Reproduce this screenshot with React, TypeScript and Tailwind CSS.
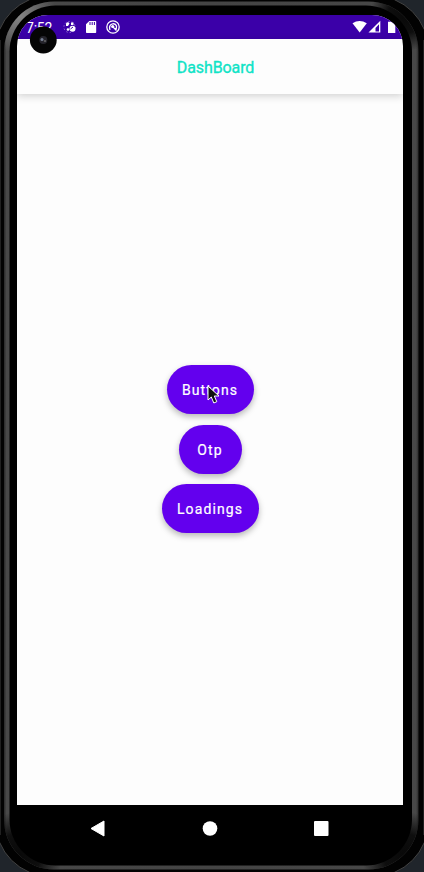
import React from "react";

function StatusIcons() {
  return (
    <svg className="absolute inset-0" width="386" height="24" viewBox="17 15 386 24" fill="#fff">
      <g>
        <path d="M66 23.500q2-2.500 3.500 0l-1.500 2.500h-2zM71 22.500h2.500v2.500H71z" />
        <circle cx="68" cy="29.500" r="1.300" />
        <circle cx="72.500" cy="28.800" r="3" />
        <circle cx="69.500" cy="27" r="5.600" fill="none" stroke="#fff" strokeWidth="1" strokeDasharray="1.500 2" opacity=".4" />
        <path d="M70.500 29l2.500-2" stroke="#3b00a8" strokeWidth="1" />
      </g>
      <path d="M89.300 21h6.200q.7 0 .7.7v10.600q0 .7-.7.7h-8.800q-.7 0-.7-.7v-8z" />
      <path d="M90 22v3M92.200 22v3M94.400 22v3" stroke="#3b00a8" strokeWidth="1" />
      <circle cx="113" cy="27" r="6.200" fill="none" stroke="#fff" strokeWidth="1.300" />
      <path d="M110 30q-1.500-4.500 2-6 3.500-1 4.500 2 .4 2.500-1.500 4M112 26l4.500 4.500" fill="none" stroke="#fff" strokeWidth="1.300" />
      <circle cx="112.700" cy="26.500" r="1.600" />
      <path d="M352.500 23.200q7-4.600 14.300 0L359.700 32.500z" />
      <path d="M368.500 32.500L380.300 20.700V32.500z" />
      <path d="M375.500 28v3.500h3.500V24.200z" fill="#3b00a8" />
      <path d="M388 21.800h6l1.300 2V33H388z" />
    </svg>
  );
}

function Pill({ label, className }: { label: string; className: string }) {
  return (
    <button
      className={`flex h-[49px] items-center justify-center rounded-full bg-[#6300ee] pt-[2px] text-[14px] font-normal tracking-[1.1px] text-white shadow-[0_3px_6px_rgba(0,0,0,0.28)] [-webkit-text-stroke:0.2px_#fff] ${className}`}
    >
      {label}
    </button>
  );
}

export default function App() {
  return (
    <div className="relative h-[872px] w-[424px] overflow-hidden bg-[#20252b] font-[Roboto,sans-serif]">
      <svg className="absolute inset-0" width="424" height="872">
        <defs>
          <linearGradient id="rim" gradientUnits="userSpaceOnUse" x1="4" x2="418.500" y1="0" y2="0">
            <stop offset="0" stopColor="#292929" />
            <stop offset=".006" stopColor="#484848" />
            <stop offset=".5" stopColor="#444" />
            <stop offset=".994" stopColor="#484848" />
            <stop offset="1" stopColor="#2c2c2c" />
          </linearGradient>
          <radialGradient id="glow">
            <stop offset="0" stopColor="#888" />
            <stop offset="1" stopColor="#888" stopOpacity="0" />
          </radialGradient>
          <radialGradient id="shade">
            <stop offset="0" stopColor="#080808" />
            <stop offset=".5" stopColor="#080808" stopOpacity=".9" />
            <stop offset="1" stopColor="#080808" stopOpacity="0" />
          </radialGradient>
          <clipPath id="rimClip">
            <rect x="4" y="1.500" width="414.500" height="868" rx="50" />
          </clipPath>
        </defs>
        <rect x="-4.500" y="-4.500" width="433" height="881" rx="55" fill="#020202" stroke="#444" />
        <path d="M.5 40v795M423.500 40v795" stroke="#202020" />
        <rect x="4" y="1.500" width="414.500" height="868" rx="50" fill="url(#rim)" />
        <g clipPath="url(#rimClip)">
          <circle cx="18" cy="15" r="38" fill="url(#glow)" />
          <circle cx="406" cy="15" r="36" fill="url(#shade)" />
          <circle cx="18" cy="856" r="44" fill="url(#shade)" />
          <circle cx="406" cy="856" r="44" fill="url(#shade)" />
        </g>
        <rect x="9.500" y="5.500" width="402.500" height="860" rx="46" fill="#000" />
      </svg>
      <div className="relative flex h-full flex-col pr-[21px] pl-[17px] pt-[15px]">
        <div className="flex h-[790px] flex-col overflow-hidden rounded-t-[31px] bg-[#fdfdfd]">
          <header className="relative h-6 shrink-0 bg-[#3b00a8]">
            <span className="absolute top-[5px] left-[9px] text-[14px] leading-4 tracking-[-0.2px] text-white">7:52</span>
            <StatusIcons />
          </header>
          <div className="relative flex h-[55px] shrink-0 items-center justify-center pt-[2px] pl-[11px] shadow-[0_2px_8px_rgba(0,0,0,0.18)]">
            <h1 className="text-base tracking-[-0.1px] text-[#10e3c6] [-webkit-text-stroke:0.35px_#10e3c6]">DashBoard</h1>
          </div>
          <main className="flex flex-1 flex-col items-center gap-[10.5px] pt-[271px]">
            <Pill label="Buttons" className="w-[87px]" />
            <Pill label="Otp" className="w-[63px]" />
            <Pill label="Loadings" className="w-[97px]" />
          </main>
        </div>
        <nav className="h-12">
          <svg width="386" height="48" viewBox="17 805 386 48" fill="#fff">
            <path d="M91 828.500L104 821v15z" stroke="#fff" strokeLinejoin="round" />
            <circle cx="210" cy="828.500" r="7.300" />
            <rect x="314" y="821" width="14.500" height="15" rx="1" />
          </svg>
        </nav>
      </div>
      <svg className="absolute top-[26px] left-[29px]" width="28" height="28">
        <circle cx="14.300" cy="14" r="13.400" fill="#050505" />
        <circle cx="14.300" cy="14" r="4" fill="#25242b" />
        <circle cx="13" cy="13.500" r="1.500" fill="#777f92" />
        <circle cx="16" cy="15" r="1" fill="#666" />
      </svg>
      <svg className="absolute top-[385px] left-[206px]" width="14" height="20">
        <path d="M2 1v14l3.300-3 2.500 6 3-1.300-2.500-5.700H13z" fill="#111" stroke="#fff" />
      </svg>
    </div>
  );
}
